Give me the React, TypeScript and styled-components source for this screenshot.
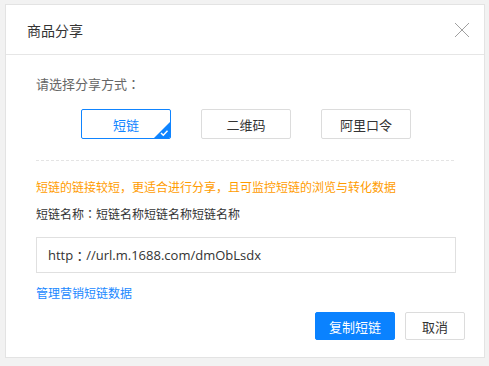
import React, { useState } from "react";
import styled, { createGlobalStyle } from "styled-components";

const GlobalStyle = createGlobalStyle`
  html, body {
    margin: 0;
    padding: 0;
    background: #f2f2f2;
  }
  body {
    padding: 4px 5px;
    font-family: "Noto Sans CJK SC", "Noto Sans", sans-serif;
  }
`;

const Dialog = styled.div`
  width: 478px;
  height: 352px;
  background: #fff;
  border: 1px solid #e3e3e3;
  display: flex;
  flex-direction: column;
`;

const Header = styled.div`
  height: 49px;
  border-bottom: 1px solid #e6e6e6;
  display: flex;
  align-items: center;
  justify-content: space-between;
  padding: 0 14px 0 21px;
`;

const Title = styled.h2`
  margin: 0;
  font-size: 14px;
  font-weight: normal;
  color: #333;
`;

const CloseButton = styled.button`
  width: 16px;
  height: 16px;
  padding: 0;
  border: none;
  background: none;
  cursor: pointer;
  display: flex;
`;

const Body = styled.div`
  padding: 19px 28px 0 30px;
  display: flex;
  flex-direction: column;
`;

// centred full-width colon, as in the original font
const Colon = styled.span`
  font-family: "Noto Sans CJK TC", sans-serif;
`;

const Label = styled.div`
  font-size: 13px;
  line-height: 20px;
  color: #666;
`;

const TypeRow = styled.div`
  display: flex;
  justify-content: center;
  gap: 30px;
  margin-top: 15px;
`;

const TypeButton = styled.button<{ $active?: boolean }>`
  position: relative;
  width: 90px;
  height: 30px;
  padding: 0;
  border: 1px solid ${(p) => (p.$active ? "#0f84ff" : "#dcdcdc")};
  border-radius: 2px;
  background: #fff;
  color: ${(p) => (p.$active ? "#0f84ff" : "#333")};
  font-family: inherit;
  font-size: 13px;
  cursor: pointer;
  overflow: hidden;
`;

const Corner = styled.svg`
  position: absolute;
  right: 0;
  bottom: 0;
`;

const Divider = styled.div`
  margin-top: 21px;
  border-top: 1px dashed #e4e4e4;
  margin-right: 2px;
`;

const Tip = styled.div`
  margin-top: 16px;
  font-size: 12px;
  line-height: 20px;
  color: #ff9c00;
`;

const NameText = styled.div`
  margin-top: 7px;
  font-size: 12px;
  line-height: 20px;
  color: #333;
`;

const LinkBox = styled.div`
  margin-top: 13px;
  height: 36px;
  box-sizing: border-box;
  border: 1px solid #e0e0e0;
  padding: 0 11px;
  display: flex;
  align-items: center;
  font-family: "Open Sans", "Noto Sans CJK SC", sans-serif;
  font-size: 13px;
  color: #333;
`;

const ManageLink = styled.a`
  margin-top: 10px;
  font-size: 12px;
  line-height: 20px;
  color: #1a88ff;
  text-decoration: none;
  cursor: pointer;
  align-self: flex-start;
`;

const Footer = styled.div`
  display: flex;
  justify-content: flex-end;
  gap: 10px;
  padding: 9px 19px 0 0;
`;

const FooterButton = styled.button<{ $primary?: boolean; $width: number }>`
  width: ${(p) => p.$width}px;
  height: 28px;
  padding: 0;
  border: 1px solid ${(p) => (p.$primary ? "#0a82ff" : "#dcdcdc")};
  border-radius: 2px;
  background: ${(p) => (p.$primary ? "#0a82ff" : "#fff")};
  color: ${(p) => (p.$primary ? "#fff" : "#333")};
  font-family: inherit;
  font-size: 13px;
  cursor: pointer;
`;

const types = ["短链", "二维码", "阿里口令"];

const App: React.FC = () => {
  const [active, setActive] = useState<string>("短链");

  return (
    <>
      <GlobalStyle />
      <Dialog>
        <Header>
          <Title>商品分享</Title>
          <CloseButton aria-label="关闭">
            <svg width="16" height="16" viewBox="0 0 16 16">
              <path d="M1 1L15 15M15 1L1 15" stroke="#a0a0a0" strokeWidth="1" fill="none" />
            </svg>
          </CloseButton>
        </Header>
        <Body>
          <Label>
            请选择分享方式<Colon>：</Colon>
          </Label>
          <TypeRow>
            {types.map((t) => (
              <TypeButton key={t} $active={active === t} onClick={() => setActive(t)}>
                {t}
                {active === t && (
                  <Corner width="16" height="16" viewBox="0 0 16 16">
                    <path d="M16 0L16 16L0 16Z" fill="#0f84ff" />
                    <path d="M7 11L9.3 13.2L13.5 8.8" stroke="#fff" strokeWidth="1.5" fill="none" />
                  </Corner>
                )}
              </TypeButton>
            ))}
          </TypeRow>
          <Divider />
          <Tip>短链的链接较短，更适合进行分享，且可监控短链的浏览与转化数据</Tip>
          <NameText>
            短链名称<Colon>：</Colon>短链名称短链名称短链名称
          </NameText>
          <LinkBox>
            http<Colon>：</Colon>//url.m.1688.com/dmObLsdx
          </LinkBox>
          <ManageLink>管理营销短链数据</ManageLink>
        </Body>
        <Footer>
          <FooterButton $primary $width={80}>复制短链</FooterButton>
          <FooterButton $width={60}>取消</FooterButton>
        </Footer>
      </Dialog>
    </>
  );
};

export default App;
